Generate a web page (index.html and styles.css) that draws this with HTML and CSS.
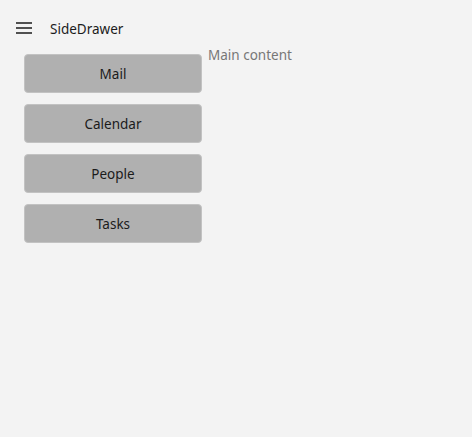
FILE: index.html
```html
<!DOCTYPE html>
<html>
<head>
<meta charset="utf-8">
<link rel="stylesheet" href="styles.css">
</head>
<body>
<div class="app">
  <header class="titlebar">
    <button class="hamburger" aria-label="Menu">
      <svg width="16" height="12" viewBox="0 0 16 12"><path d="M0 1H16M0 6H16M0 11H16" stroke="#1b1b1b" stroke-width="1.5" fill="none"/></svg>
    </button>
    <span class="title">SideDrawer</span>
  </header>
  <div class="body">
    <nav class="drawer">
      <button class="nav-btn">Mail</button>
      <button class="nav-btn">Calendar</button>
      <button class="nav-btn">People</button>
      <button class="nav-btn">Tasks</button>
    </nav>
    <main class="main">Main content</main>
  </div>
</div>
</body>
</html>
```
FILE: styles.css
```css
html, body {
  margin: 0;
  padding: 0;
  background: #f3f3f3;
  font-family: "Segoe UI", "Noto Sans", "Open Sans", sans-serif;
  font-size: 13.5px;
  color: #1b1b1b;
}
.app {
  display: flex;
  flex-direction: column;
  min-height: 437px;
}
.titlebar {
  display: flex;
  align-items: center;
  height: 44px;
  padding-top: 12px;
  box-sizing: border-box;
}
.hamburger {
  border: none;
  background: none;
  padding: 0;
  margin-left: 16px;
  width: 16px;
  height: 12px;
  display: flex;
  align-items: center;
  justify-content: center;
}
.hamburger svg { display: block; }
.title {
  margin-left: 18px;
  margin-top: 2px;
  font-size: 13.5px;
  color: #1b1b1b;
}
.body {
  display: flex;
}
.drawer {
  display: flex;
  flex-direction: column;
  gap: 11px;
  padding: 10px 6px 0 24px;
  width: 178px;
}
.nav-btn {
  height: 39px;
  width: 178px;
  background: #b0b0b0;
  border: 1px solid #c2c2c2;
  border-radius: 4px;
  font-family: inherit;
  font-size: 13.5px;
  color: #1b1b1b;
  padding: 0;
}
.main {
  color: #777777;
  font-size: 13.5px;
  line-height: 20px;
  padding-top: 1px;
}
```
